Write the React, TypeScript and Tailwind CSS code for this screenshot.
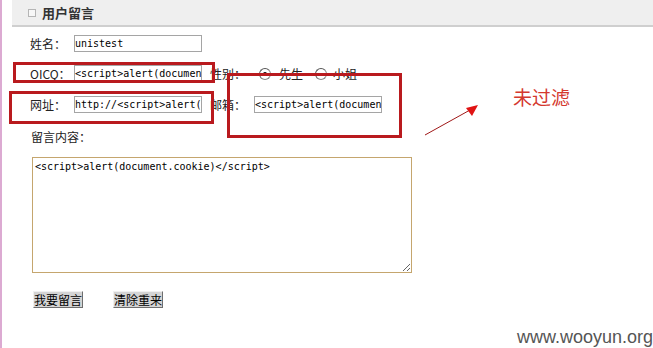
import React from 'react';

const cjk = "font-['Noto_Sans_CJK_SC','Noto_Sans',sans-serif]";
const mono = "font-['DejaVu_Sans_Mono','Liberation_Mono',monospace]";

const xss = '<script>alert(document.cookie)</script>';

const Field: React.FC<{ value: string; width?: string }> = ({ value, width = 'w-[128px]' }) => (
  <input
    readOnly
    value={value}
    className={`${width} h-[17px] border border-[#a5a5a5] bg-white px-0 text-[10px] leading-[15px] text-black outline-none ${mono}`}
  />
);

const Radio: React.FC<{ checked?: boolean }> = ({ checked }) => (
  <span className="flex h-[12px] w-[12px] items-center justify-center rounded-full border border-[#8a8a8a] border-t-[#555] border-l-[#555] bg-white">
    {checked && <span className="h-[4px] w-[4px] rounded-full bg-black" />}
  </span>
);

const Label: React.FC<{ children: React.ReactNode }> = ({ children }) => (
  <span className="w-[44px] shrink-0 text-[12px] leading-[16px] text-[#222]">{children}</span>
);

const App: React.FC = () => {
  return (
    <div className={`relative h-[348px] w-[653px] overflow-hidden border-l-2 border-[#dcaad2] bg-white ${cjk}`}>
      <div className="ml-[10px] flex h-[27px] items-center border-b-2 border-[#cfcfcf] bg-[#efefef] pl-[16px]">
        <span className="h-[8px] w-[8px] border border-[#b5b5b5] bg-[#f7f7f7]" />
        <span className="ml-[6px] text-[13px] font-bold leading-[16px] text-[#333]">用户留言</span>
      </div>

      <div className="pl-[28px] pt-[8px]">
        <div className="flex h-[17px] items-center">
          <Label>姓名：</Label>
          <Field value="unistest" />
        </div>

        <div className="mt-[13px] flex h-[17px] items-center">
          <Label>OICQ：</Label>
          <Field value={xss} />
          <span className="ml-[8px]" />
          <Label>性别：</Label>
          <span className="ml-[5px]" />
          <Radio checked />
          <span className="ml-[8px] text-[12px] leading-[16px] text-[#222]">先生</span>
          <span className="ml-[12px]" />
          <Radio />
          <span className="ml-[6px] text-[12px] leading-[16px] text-[#222]">小姐</span>
        </div>

        <div className="mt-[14px] flex h-[17px] items-center">
          <Label>网址：</Label>
          <Field value={'http://' + xss} />
          <span className="ml-[8px]" />
          <Label>邮箱：</Label>
          <Field value={xss} />
        </div>

        <div className="ml-[1px] mt-[16px] text-[12px] leading-[16px] text-[#222]">留言内容：</div>

        <textarea
          readOnly
          defaultValue={xss}
          className={`ml-[2px] mt-[12px] block h-[116px] w-[380px] border border-[#c5a66e] bg-white px-[2px] py-[2px] text-[10px] leading-[14px] text-black outline-none ${mono}`}
        />

        <div className="ml-[3px] mt-[18px] flex gap-[30px]">
          <button className="h-[17px] w-[50px] border border-[#f0f0f0] border-b-[#6e6e6e] border-r-[#6e6e6e] bg-[#d4d4d4] p-0 text-[12px] leading-[15px] text-black">
            我要留言
          </button>
          <button className="h-[17px] w-[50px] border border-[#f0f0f0] border-b-[#6e6e6e] border-r-[#6e6e6e] bg-[#d4d4d4] p-0 text-[12px] leading-[15px] text-black">
            清除重来
          </button>
        </div>
      </div>

      {/* annotations */}
      <div className="absolute left-[11px] top-[62px] h-[21px] w-[202px] border-[3px] border-[#b91a1e]" />
      <div className="absolute left-[7px] top-[91px] h-[33px] w-[205px] border-[3px] border-[#b91a1e]" />
      <div className="absolute left-[225px] top-[73px] h-[65px] w-[175px] border-[3px] border-[#b91a1e]" />

      <svg className="absolute left-0 top-0" width="653" height="348">
        <line x1="423" y1="135" x2="468" y2="110" stroke="#a01818" strokeWidth="1" />
        <polygon points="476,105 464,108 470,116" fill="#e01414" />
      </svg>

      <span className="absolute left-[511px] top-[86px] text-[19px] leading-[22px] text-[#d4382e]">未过滤</span>

      <span className="absolute left-[515px] top-[326px] font-['Liberation_Sans',Arial,sans-serif] text-[18px] leading-[22px] text-[#555]">
        www.wooyun.org
      </span>
    </div>
  );
};

export default App;
